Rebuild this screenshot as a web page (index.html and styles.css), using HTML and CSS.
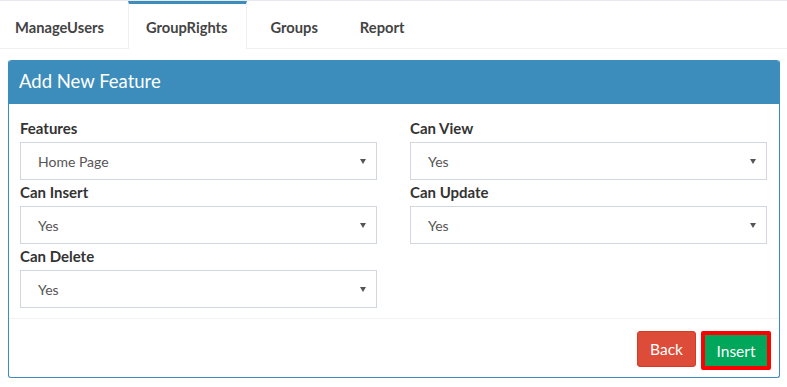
FILE: index.html
```html
<!DOCTYPE html>
<html>
<head>
<meta charset="utf-8">
<link rel="stylesheet" href="styles.css">
</head>
<body>
<div class="tabs">
  <a class="tab first">ManageUsers</a>
  <a class="tab active">GroupRights</a>
  <a class="tab">Groups</a>
  <a class="tab">Report</a>
</div>
<div class="panel">
  <div class="panel-head">Add New Feature</div>
  <div class="panel-body">
    <div class="field">
      <label>Features</label>
      <div class="select"><span>Home Page</span><i class="caret"></i></div>
    </div>
    <div class="field">
      <label>Can View</label>
      <div class="select"><span>Yes</span><i class="caret"></i></div>
    </div>
    <div class="field">
      <label>Can Insert</label>
      <div class="select"><span>Yes</span><i class="caret"></i></div>
    </div>
    <div class="field">
      <label>Can Update</label>
      <div class="select"><span>Yes</span><i class="caret"></i></div>
    </div>
    <div class="field">
      <label>Can Delete</label>
      <div class="select"><span>Yes</span><i class="caret"></i></div>
    </div>
  </div>
  <div class="panel-foot">
    <button class="btn back">Back</button>
    <button class="btn insert">Insert</button>
  </div>
</div>
</body>
</html>
```
FILE: styles.css
```css
* { box-sizing: border-box; }
html, body { margin: 0; padding: 0; background: #fff; }
body { font-family: "Lato", "Source Sans Pro", sans-serif; color: #333; font-size: 14px; }

.tabs {
  display: flex;
  height: 49px;
  border-top: 1px solid #e6eaf0;
  border-bottom: 1px solid #eef0f3;
}
.tab {
  display: block;
  padding: 0 18px;
  margin-right: 6px;
  line-height: 47px;
  font-weight: bold;
  font-size: 14.7px;
  color: #444;
  border-top: 3px solid transparent;
}
.tab.first { padding-left: 15px; }
.tab.active {
  border-top-color: #3c8dbc;
  border-left: 1px solid #eef0f3;
  border-right: 1px solid #eef0f3;
  padding: 0 18px 0 17px;
  background: #fff;
  margin-bottom: -1px;
  height: 48px;
}

.panel {
  margin: 11px 8px 0 8px;
  width: 772px;
  border: 1px solid #3c8dbc;
  border-top: none;
  border-radius: 3px;
  box-shadow: 0 1px 2px rgba(0,0,0,0.08);
}
.panel-head {
  background: #3c8dbc;
  height: 44px;
  padding-left: 10px;
  line-height: 43px;
  font-size: 18.5px;
  color: #fff;
  border-radius: 3px 3px 0 0;
}
.panel-body {
  display: grid;
  grid-template-columns: 357px 357px;
  column-gap: 33px;
  padding: 14px 11px 8px 11px;
}
.field label {
  display: block;
  font-weight: bold;
  font-size: 15px;
  line-height: 20px;
  margin-bottom: 4px;
  color: #333;
}
.select {
  height: 38px;
  margin-bottom: 2px;
  border: 1px solid #d2d6de;
  display: flex;
  align-items: center;
  justify-content: space-between;
  padding: 0 10px 0 17px;
  color: #555;
  font-size: 14px;
}
.caret {
  width: 0; height: 0;
  border-left: 3px solid transparent;
  border-right: 3px solid transparent;
  border-top: 5px solid #555;
}
.panel-foot {
  border-top: 1px solid #f2f2f2;
  display: flex;
  justify-content: flex-end;
  align-items: flex-start;
  gap: 5px;
  padding: 12px 8px 0 0;
  height: 59px;
}
.btn {
  font-family: inherit;
  font-size: 15.5px;
  color: #fff;
  cursor: pointer;
}
.back {
  width: 59px; height: 36px;
  background: #dd4b39;
  border: 1px solid #d73925;
  border-radius: 3px;
}
.insert {
  width: 70px; height: 39px;
  background: #00a65a;
  border: 4px solid #ff0000;
  border-radius: 2px;
}
```
